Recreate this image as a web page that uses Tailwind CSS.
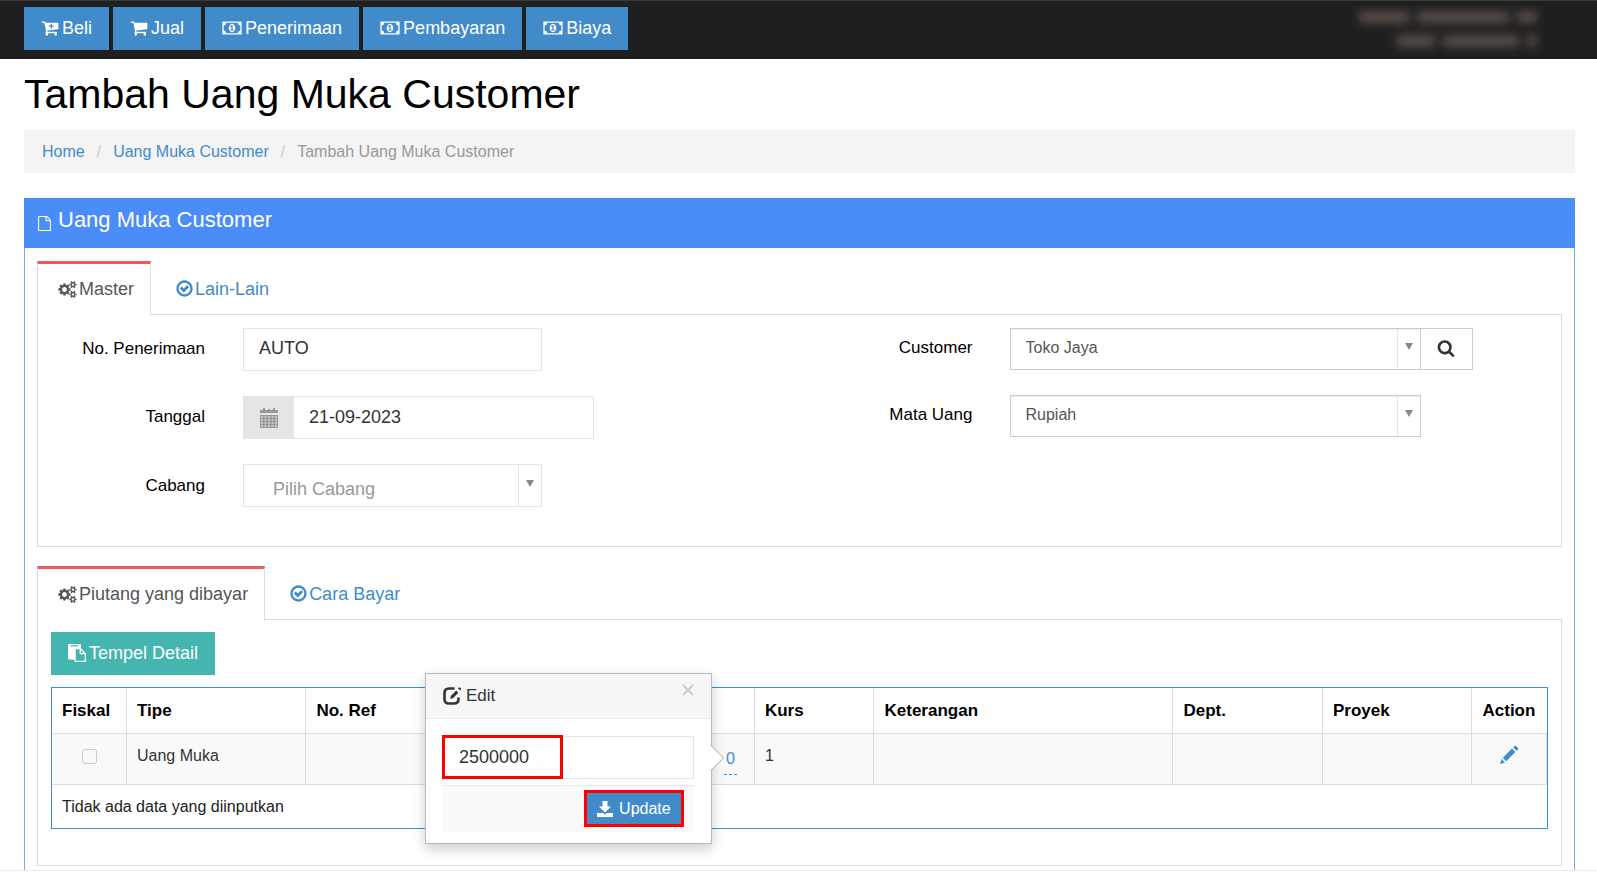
<!DOCTYPE html>
<html lang="id">
<head>
    <meta charset="UTF-8">
    <meta name="viewport" content="width=device-width, initial-scale=1.0">
    <title>Tambah Uang Muka Customer</title>
    <script src="https://cdn.jsdelivr.net/npm/@tailwindcss/browser@4"></script>
</head>
<body class="bg-white font-['Liberation_Sans',Arial,sans-serif] text-base text-black">
    <!-- Icon symbols -->
    <svg class="hidden" aria-hidden="true">
        <symbol id="i-cart-plus" viewBox="0 0 1792 1792"><path d="M1280 704q0-26-19-45t-45-19h-128v-128q0-26-19-45t-45-19-45 19-19 45v128h-128q-26 0-45 19t-19 45 19 45 45 19h128v128q0 26 19 45t45 19 45-19 19-45v-128h128q26 0 45-19t19-45zm-576 832q0 53-37.5 90.5t-90.5 37.5-90.5-37.5-37.5-90.5 37.5-90.5 90.5-37.5 90.5 37.5 37.5 90.5zm896 0q0 53-37.5 90.5t-90.5 37.5-90.5-37.5-37.5-90.5 37.5-90.5 90.5-37.5 90.5 37.5 37.5 90.5zm128-1088v512q0 24-16 42.5t-41 21.5l-1044 122q1 7 4.5 21.5t6 26.5 2.5 22q0 16-24 64h920q26 0 45 19t19 45-19 45-45 19h-1024q-26 0-45-19t-19-45q0-14 11-39.5t29.5-59.5 20.5-38l-177-823h-204q-26 0-45-19t-19-45 19-45 45-19h256q16 0 28.5 6.5t20 15.5 13 24.5 7.5 26.5 5.5 29.5 4.5 25.5h1201q26 0 45 19t19 45z"/></symbol>
        <symbol id="i-cart" viewBox="0 0 1792 1792"><path d="M704 1536q0 52-38 90t-90 38-90-38-38-90 38-90 90-38 90 38 38 90zm896 0q0 52-38 90t-90 38-90-38-38-90 38-90 90-38 90 38 38 90zm128-1088v512q0 24-16.500 42.500t-40.500 21.500l-1044 122q13 60 13 70 0 16-24 64h920q26 0 45 19t19 45-19 45-45 19h-1024q-26 0-45-19t-19-45q0-11 8-31.500t16-36 21.500-40 15.500-29.500l-177-823h-204q-26 0-45-19t-19-45 19-45 45-19h256q16 0 28.500 6.500t19.500 15.500 13 24.500 8 26 5.500 29.500 4.500 26h1201q26 0 45 19t19 45z"/></symbol>
        <symbol id="i-money" viewBox="0 0 1920 1792"><path d="M768 1152h384v-96h-128v-448h-114l-148 137 77 80q42-37 55-57h2v288h-128v96zm512-256q0 70-21 142t-59.500 134-101.500 101-138 39-138-39-101.500-101-59.500-134-21-142 21-142 59.500-134 101.500-101 138-39 138 39 101.500 101 59.500 134 21 142zm512 256v-512q-106 0-181-75t-75-181h-1152q0 106-75 181t-181 75v512q106 0 181 75t75 181h1152q0-106 75-181t181-75zm128-832v1152q0 26-19 45t-45 19h-1792q-26 0-45-19t-19-45v-1152q0-26 19-45t45-19h1792q26 0 45 19t19 45z"/></symbol>
        <symbol id="i-file" viewBox="0 0 1792 1792"><path d="M1596 380q28 28 48 76t20 88v1152q0 40-28 68t-68 28h-1344q-40 0-68-28t-28-68v-1600q0-40 28-68t68-28h896q40 0 88 20t76 48zm-444-244v376h376q-10-29-22-41l-313-313q-12-12-41-22zm384 1528v-1024h-416q-40 0-68-28t-28-68v-416h-768v1536h1280z"/></symbol>
        <symbol id="i-check" viewBox="0 0 1792 1792"><path d="M1299 813l-422 422q-19 19-45 19t-45-19l-294-294q-19-19-19-45t19-45l102-102q19-19 45-19t45 19l147 147 275-275q19-19 45-19t45 19l102 102q19 19 19 45t-19 45zm141 83q0-148-73-273t-198-198-273-73-273 73-198 198-73 273 73 273 198 198 273 73 273-73 198-198 73-273zm224 0q0 209-103 385.500t-279.500 279.500-385.500 103-385.500-103-279.500-279.500-103-385.500 103-385.500 279.500-279.500 385.500-103 385.500 103 279.500 279.500 103 385.500z"/></symbol>
        <symbol id="i-cogs" viewBox="0 0 1920 1792"><path d="M896 896q0-106-75-181t-181-75-181 75-75 181 75 181 181 75 181-75 75-181zm768 512q0-52-38-90t-90-38-90 38-38 90q0 53 37.500 90.500t90.500 37.500 90.500-37.500 37.500-90.500zm0-1024q0-52-38-90t-90-38-90 38-38 90q0 53 37.500 90.500t90.500 37.500 90.500-37.500 37.500-90.500zm-384 421v185q0 10-7 19.500t-16 10.500l-155 24q-11 35-32 76 34 48 90 115 7 10 7 20 0 12-7 19-23 30-82.500 89.500t-78.500 59.500q-11 0-21-7l-115-90q-37 19-77 31-11 108-23 155-7 24-30 24h-186q-11 0-20-7.500t-10-17.500l-23-153q-34-10-75-31l-118 89q-7 7-20 7-11 0-21-8-144-133-144-160 0-9 7-19 10-14 41-53t47-61q-23-44-35-82l-152-24q-10-1-17-9.500t-7-19.500v-185q0-10 7-19.500t16-10.500l155-24q11-35 32-76-34-48-90-115-7-11-7-20 0-12 7-20 22-30 82-89t79-59q11 0 21 7l115 90q34-18 77-32 11-108 23-154 7-24 30-24h186q11 0 20 7.500t10 17.500l23 153q34 10 75 31l118-89q8-7 20-7 11 0 21 8 144 133 144 160 0 9-7 19-12 16-42 54t-45 60q23 48 34 82l152 23q10 2 17 10.500t7 19.500zm640 533v140q0 16-149 31-12 27-30 52 51 113 51 138 0 4-4 7-122 71-124 71-8 0-46-47t-52-68q-20 2-30 2t-30-2q-14 21-52 68t-46 47q-2 0-124-71-4-3-4-7 0-25 51-138-18-25-30-52-149-15-149-31v-140q0-16 149-31 13-29 30-52-51-113-51-138 0-4 4-7 4-2 35-20t59-34 30-16q8 0 46 46.500t52 67.500q20-2 30-2t30 2q51-71 92-112l6-2q4 0 124 70 4 3 4 7 0 25-51 138 17 23 30 52 149 15 149 31zm0-1024v140q0 16-149 31-12 27-30 52 51 113 51 138 0 4-4 7-122 71-124 71-8 0-46-47t-52-68q-20 2-30 2t-30-2q-14 21-52 68t-46 47q-2 0-124-71-4-3-4-7 0-25 51-138-18-25-30-52-149-15-149-31v-140q0-16 149-31 13-29 30-52-51-113-51-138 0-4 4-7 4-2 35-20t59-34 30-16q8 0 46 46.500t52 67.500q20-2 30-2t30 2q51-71 92-112l6-2q4 0 124 70 4 3 4 7 0 25-51 138 17 23 30 52 149 15 149 31z"/></symbol>
        <symbol id="i-paste" viewBox="0 0 1792 1792"><path d="M768 1664h896v-640h-416q-40 0-68-28t-28-68v-416h-384v1152zm256-1440v-64q0-13-9.500-22.500t-22.500-9.500h-704q-13 0-22.500 9.500t-9.500 22.500v64q0 13 9.500 22.500t22.500 9.500h704q13 0 22.500-9.500t9.500-22.500zm256 672h299l-299-299v299zm512 128v672q0 40-28 68t-68 28h-960q-40 0-68-28t-28-68v-160h-544q-40 0-68-28t-28-68v-1344q0-40 28-68t68-28h1088q40 0 68 28t28 68v328q21 13 36 28l408 408q28 28 48 76t20 88z"/></symbol>
        <symbol id="i-search" viewBox="0 0 1792 1792"><path d="M1216 832q0-185-131.500-316.500t-316.500-131.500-316.500 131.500-131.500 316.500 131.500 316.500 316.500 131.500 316.500-131.500 131.500-316.500zm512 832q0 52-38 90t-90 38q-54 0-90-38l-343-342q-179 124-399 124-143 0-273.500-55.500t-225-150-150-225-55.500-273.500 55.500-273.500 150-225 225-150 273.500-55.500 273.500 55.500 225 150 150 225 55.500 273.500q0 220-124 399l343 343q37 37 37 90z"/></symbol>
        <symbol id="i-calendar" viewBox="0 0 18 20"><path fill-rule="evenodd" d="M0 2h3V0h2v2h3V1h2v1h3V0h2v2h3v3H0zM0 7h18v13H0zM1 8v2h2V8zm3.500 0v2h2V8zM8 8v2h2V8zm3.500 0v2h2V8zM15 8v2h2V8zM1 11v2h2v-2zm3.500 0v2h2v-2zM8 11v2h2v-2zm3.500 0v2h2v-2zM15 11v2h2v-2zM1 14v2h2v-2zm3.500 0v2h2v-2zM8 14v2h2v-2zm3.500 0v2h2v-2zM15 14v2h2v-2zM1 17v2h2v-2zm3.500 0v2h2v-2zM8 17v2h2v-2zm3.500 0v2h2v-2zM15 17v2h2v-2z"/><path d="M0 7h18v13H0z" fill-opacity=".35"/></symbol>
        <symbol id="i-caret" viewBox="0 0 8 7"><path d="M0 0h8L4 7z"/></symbol>
        <symbol id="i-edit" viewBox="0 0 18 18"><path d="M11.500 1.500H6Q1.500 1.500 1.500 6v6q0 4.500 4.500 4.500h5q4.500 0 4.500-4.500v-1.500" fill="none" stroke="currentColor" stroke-width="2.600"/><path d="M7 12l1-3.200L13.200 3.600l2.200 2.200L10.200 11zM15 1.600l1-1q.5-.5 1 0l1 1q.4.5 0 1l-.9.900z"/></symbol>
        <symbol id="i-download" viewBox="0 0 16 16"><path d="M5.500 0h5v5.500H14L8 11.500 2 5.500h3.500zM0 12h6l2 1.500L10 12h6v4H0z"/></symbol>
        <symbol id="i-pencil" viewBox="0 0 20 20"><path d="M1 19l1.600-5 3.400 3.400zM3.800 12.800L13 3.600l3.400 3.400-9.200 9.200zM14.200 2.400l1.400-1.400q.7-.6 1.400 0l2 2q.6.7 0 1.400l-1.400 1.400z"/></symbol>
    </svg>

    <!-- Navbar -->
    <header class="flex items-start justify-between border-t border-[#3a3a3a] bg-[#1f1f1f] pt-[6px] pr-[60px] pb-[9px] pl-6 text-lg text-white">
        <nav class="flex gap-[4px]">
            <button type="button" class="flex h-[43px] items-center gap-[3px] bg-[#428bca] px-[17px] pb-[2px]"><svg class="size-[18px] fill-current"><use href="#i-cart-plus"/></svg>Beli</button>
            <button type="button" class="flex h-[43px] items-center gap-[3px] bg-[#428bca] px-[17px] pb-[2px]"><svg class="size-[18px] fill-current"><use href="#i-cart"/></svg>Jual</button>
            <button type="button" class="flex h-[43px] items-center gap-[3px] bg-[#428bca] px-[17px] pb-[2px]"><svg class="h-[18px] w-[20px] fill-current"><use href="#i-money"/></svg>Penerimaan</button>
            <button type="button" class="flex h-[43px] items-center gap-[3px] bg-[#428bca] px-[17px] pb-[2px]"><svg class="h-[18px] w-[20px] fill-current"><use href="#i-money"/></svg>Pembayaran</button>
            <button type="button" class="flex h-[43px] items-center gap-[3px] bg-[#428bca] px-[17px] pb-[2px]"><svg class="h-[18px] w-[20px] fill-current"><use href="#i-money"/></svg>Biaya</button>
        </nav>
        <!-- Obscured account info -->
        <div class="flex flex-col items-end gap-[12px] pt-[4px] blur-[5px]" aria-hidden="true">
            <div class="flex gap-2">
                <span class="h-[12px] w-[50px] bg-[#564d47]"></span>
                <span class="h-[12px] w-[92px] bg-[#564d47]"></span>
                <span class="h-[12px] w-[20px] bg-[#564d47]"></span>
            </div>
            <div class="flex gap-2">
                <span class="h-[12px] w-[38px] bg-[#564d47]"></span>
                <span class="h-[12px] w-[76px] bg-[#564d47]"></span>
                <span class="h-[12px] w-[10px] bg-[#564d47]"></span>
            </div>
        </div>
    </header>

    <main class="pr-[22px] pl-6">
        <h1 class="pt-[13px] pb-[14px] text-[41px] leading-[44px]">Tambah Uang Muka Customer</h1>

        <!-- Breadcrumb -->
        <nav class="mb-[25px] flex h-[43px] items-center gap-[12px] bg-[#f4f4f4] px-[18px] text-[#428bca]">
            <a href="#">Home</a>
            <span class="text-[#ccc]">/</span>
            <a href="#">Uang Muka Customer</a>
            <span class="text-[#ccc]">/</span>
            <span class="text-[#999]">Tambah Uang Muka Customer</span>
        </nav>

        <section class="border-x border-[#6fadf5] pb-[4px]">
            <h2 class="-mx-px flex h-[50px] items-start gap-[6px] bg-[#4b8df8] px-[13px] pt-[9px] text-[22px] leading-[26px] text-white"><svg class="mt-[8px] h-[17px] w-[15px] fill-current"><use href="#i-file"/></svg>Uang Muka Customer</h2>

            <div class="px-3 pt-[13px]">
                <!-- Master tabs -->
                <div class="flex h-[54px] items-stretch text-lg">
                    <a href="#" class="relative z-10 -mb-px flex items-center gap-[2px] border-x border-t-[3px] border-x-[#ddd] border-t-[#f3565d] bg-white pr-[16px] pb-[2px] pl-5 text-[#555]"><svg class="h-[17px] w-[19px] fill-current"><use href="#i-cogs"/></svg>Master</a>
                    <a href="#" class="flex items-center gap-px px-6 pt-px text-[#428bca]"><svg class="size-[19px] fill-current"><use href="#i-check"/></svg>Lain-Lain</a>
                </div>
                <div class="-mt-px grid grid-cols-2 border border-[#ddd] px-[14px] pt-[13px] pb-[39px]">
                    <div class="flex flex-col gap-[25px]">
                        <div class="flex h-[43px] items-center">
                            <label for="no" class="w-[153px] pb-[2px] text-right text-[17px]">No. Penerimaan</label>
                            <input id="no" value="AUTO" class="ml-[38px] h-full w-2/5 border border-[#e5e5e5] px-[15px] pb-[2px] text-lg text-[#333]">
                        </div>
                        <div class="flex h-[43px] items-center">
                            <label for="tgl" class="w-[153px] pb-[2px] text-right text-[17px]">Tanggal</label>
                            <div class="ml-[38px] flex h-full w-[47%] border border-[#e5e5e5]">
                                <span class="flex w-[50px] items-center justify-center bg-[#e5e5e5] text-[#999]"><svg class="h-[20px] w-[18px] fill-current"><use href="#i-calendar"/></svg></span>
                                <input id="tgl" value="21-09-2023" class="w-full min-w-0 flex-1 px-[15px] pb-[2px] text-lg text-[#333]">
                            </div>
                        </div>
                        <div class="flex h-[43px] items-center">
                            <label for="cabang" class="w-[153px] text-right text-[17px]">Cabang</label>
                            <div class="ml-[38px] flex h-full w-2/5 border border-[#e5e5e5]">
                                <select id="cabang" class="min-w-0 flex-1 appearance-none pt-[6px] pl-[29px] text-lg text-[#999]"><option>Pilih Cabang</option></select>
                                <span class="flex w-[23px] justify-center border-l border-[#e5e5e5] pt-[15px] text-[#888]"><svg class="h-[7px] w-[8px] fill-current"><use href="#i-caret"/></svg></span>
                            </div>
                        </div>
                    </div>
                    <div class="flex flex-col gap-[25px]">
                        <div class="flex h-[42px] items-center">
                            <label for="customer" class="w-[173px] pb-[3px] text-right text-[17px]">Customer</label>
                            <div class="ml-[37px] flex h-full w-[55%] border border-[#ccc] shadow-[inset_0_1px_1px_rgba(0,0,0,0.08)]">
                                <select id="customer" class="min-w-0 flex-1 appearance-none pb-[3px] pl-[15px] text-[#555]"><option>Toko Jaya</option></select>
                                <span class="flex w-[23px] justify-center border-l border-[#e5e5e5] pt-[14px] text-[#888]"><svg class="h-[7px] w-[8px] fill-current"><use href="#i-caret"/></svg></span>
                            </div>
                            <button type="button" aria-label="Cari" class="flex h-full w-[52px] items-center justify-center border border-l-0 border-[#ccc] pb-[2px] text-[#333]"><svg class="size-[18px] fill-current"><use href="#i-search"/></svg></button>
                        </div>
                        <div class="flex h-[42px] items-center">
                            <label for="mata" class="w-[173px] pb-[3px] text-right text-[17px]">Mata Uang</label>
                            <div class="ml-[37px] flex h-full w-[55%] border border-[#ccc] shadow-[inset_0_1px_1px_rgba(0,0,0,0.08)]">
                                <select id="mata" class="min-w-0 flex-1 appearance-none pb-[3px] pl-[15px] text-[#555]"><option>Rupiah</option></select>
                                <span class="flex w-[23px] justify-center border-l border-[#e5e5e5] pt-[14px] text-[#888]"><svg class="h-[7px] w-[8px] fill-current"><use href="#i-caret"/></svg></span>
                            </div>
                        </div>
                    </div>
                </div>

                <!-- Detail tabs -->
                <div class="mt-[19px] flex h-[54px] items-stretch text-lg">
                    <a href="#" class="relative z-10 -mb-px flex items-center gap-[2px] border-x border-t-[3px] border-x-[#ddd] border-t-[#f3565d] bg-white pr-[16px] pb-[2px] pl-5 text-[#555]"><svg class="h-[17px] w-[19px] fill-current"><use href="#i-cogs"/></svg>Piutang yang dibayar</a>
                    <a href="#" class="flex items-center gap-px px-6 pt-px text-[#428bca]"><svg class="size-[19px] fill-current"><use href="#i-check"/></svg>Cara Bayar</a>
                </div>
                <div class="-mt-px border border-[#ddd] px-[13px] pt-[12px] pb-[36px]">
                    <button type="button" class="mb-[12px] flex h-[43px] items-center gap-[3px] bg-[#45b6af] px-[17px] pb-[2px] text-lg text-white"><svg class="size-[18px] fill-current"><use href="#i-paste"/></svg>Tempel Detail</button>

                    <div class="border border-[#3c93c2]">
                        <table class="w-full table-fixed border-separate border-spacing-0">
                            <colgroup>
                                <col class="w-[74px]"><col class="w-[12%]"><col class="w-[10%]"><col class="w-[20%]"><col class="w-[8%]"><col class="w-[20%]"><col class="w-[10%]"><col class="w-[10%]"><col>
                            </colgroup>
                            <thead>
                                <tr class="h-[45px] text-left text-[17px]">
                                    <th class="px-[10px]">Fiskal</th>
                                    <th class="border-l border-[#ddd] px-[10px]">Tipe</th>
                                    <th class="border-l border-[#ddd] px-[10px]">No. Ref</th>
                                    <th class="border-l border-[#ddd] px-[10px]"></th>
                                    <th class="border-l border-[#ddd] px-[10px]">Kurs</th>
                                    <th class="border-l border-[#ddd] px-[10px]">Keterangan</th>
                                    <th class="border-l border-[#ddd] px-[10px]">Dept.</th>
                                    <th class="border-l border-[#ddd] px-[10px]">Proyek</th>
                                    <th class="border-l border-[#ddd] px-[10px]">Action</th>
                                </tr>
                            </thead>
                            <tbody>
                                <tr class="h-[51px] bg-[#f9f9f9] align-top text-[#333]">
                                    <td class="border-t border-[#ddd] pt-[15px] text-center"><input type="checkbox" disabled aria-label="Fiskal" class="mx-auto block size-[15px] appearance-none rounded-[3px] border border-[#ccc]"></td>
                                    <td class="border-t border-l border-[#ddd] px-[10px] pt-[10px]">Uang Muka</td>
                                    <td class="border-t border-l border-[#ddd]"></td>
                                    <td class="border-t border-l border-[#ddd] pt-[10px] pr-[17px] text-right">
                                        <div class="relative inline-block">
                                            <button type="button" class="block border-b border-dashed border-[#428bca] px-[2px] pt-[3px] pb-[3px] text-[#428bca]">0</button>
                                            <!-- Edit popover -->
                                            <div class="absolute -top-[71px] right-[25px] z-20 w-[287px] border border-[#bbb] bg-white text-left shadow-[0_5px_12px_rgba(0,0,0,0.2)]">
                                                <div class="flex h-[45px] items-center gap-[5px] border-b border-[#ebebeb] bg-[#f7f7f7] px-[17px] text-[17px] text-[#333]">
                                                    <svg class="size-[18px] fill-current"><use href="#i-edit"/></svg>Edit
                                                    <button type="button" aria-label="Tutup" class="mb-[12px] ml-auto text-[#ccc]"><svg class="size-[12px]" viewBox="0 0 12 12"><path d="M1 1l10 10M11 1L1 11" stroke="currentColor" stroke-width="1.800"/></svg></button>
                                                </div>
                                                <div class="px-[17px] pt-[17px] pb-[11px]">
                                                    <div class="relative">
                                                        <input aria-label="Nilai" value="2500000" class="block h-[43px] w-full border border-[#e5e5e5] px-[15px] text-lg text-[#333]">
                                                        <span class="pointer-events-none absolute -top-px -left-px h-[44px] w-[121px] border-[3px] border-[#f00]"></span>
                                                    </div>
                                                    <div class="mt-[6px] flex h-[47px] items-start justify-end border-t border-[#e8e8e8] bg-[#fafafa] pt-[4px] pr-[10px]">
                                                        <button type="button" class="flex h-[37px] w-[100px] items-center justify-center gap-[6px] border-[3px] border-[#f00] bg-[#428bca] text-white"><svg class="size-[16px] fill-current"><use href="#i-download"/></svg>Update</button>
                                                    </div>
                                                </div>
                                                <svg class="absolute top-[71px] -right-[13px] h-[26px] w-[14px]" viewBox="0 0 14 26"><path d="M0 0l13 13L0 26z" fill="#fff"/><path d="M1 0.500L13.500 13 1 25.500" fill="none" stroke="#aaa"/></svg>
                                            </div>
                                        </div>
                                    </td>
                                    <td class="border-t border-l border-[#ddd] px-[10px] pt-[10px]">1</td>
                                    <td class="border-t border-l border-[#ddd]"></td>
                                    <td class="border-t border-l border-[#ddd]"></td>
                                    <td class="border-t border-l border-[#ddd]"></td>
                                    <td class="border-x border-t border-[#ddd] pt-[11px]"><a href="#" aria-label="Edit" class="flex justify-center text-[#428bca]"><svg class="size-[20px] fill-current"><use href="#i-pencil"/></svg></a></td>
                                </tr>
                                <tr class="h-[44px] text-[#222]">
                                    <td colspan="9" class="border-t border-[#ddd] px-[10px]">Tidak ada data yang diinputkan</td>
                                </tr>
                            </tbody>
                        </table>
                    </div>
                </div>
            </div>
        </section>
    </main>
    <footer class="border-t border-[#ebebeb]"></footer>
</body>
</html>
